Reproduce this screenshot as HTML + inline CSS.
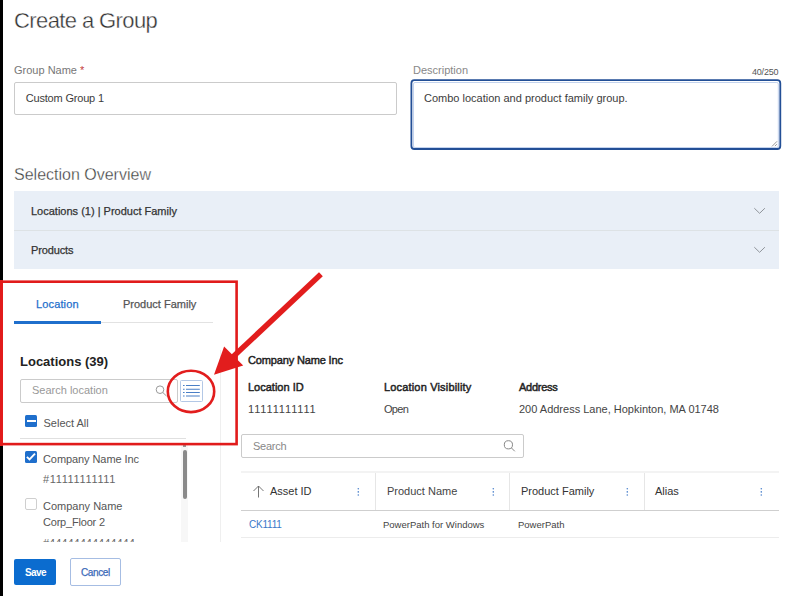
<!DOCTYPE html>
<html><head><meta charset="utf-8">
<style>
*{box-sizing:border-box;margin:0;padding:0}
html,body{width:800px;height:596px;overflow:hidden;background:#fff;font-family:"Liberation Sans",sans-serif;color:#333}
.a{position:absolute;white-space:nowrap;line-height:normal}
.t{position:absolute;white-space:nowrap;line-height:normal;font-size:11px}
.ln{position:absolute}
.inp{position:absolute;border:1px solid #cbcbcb;border-radius:2px;background:#fff}
.med{-webkit-text-stroke:0.25px currentColor}
.b{font-weight:bold}
</style></head><body>
<div class="ln" style="left:0;top:0;width:3px;height:596px;background:#000"></div>

<div class="a" id="t_title" style="left:14px;top:8px;font-size:22px;letter-spacing:-0.6px;color:#333;-webkit-text-stroke:0.35px #fff">Create a Group</div>

<div class="t" id="t_gn" style="left:14px;top:64px;color:#777">Group Name <span style="color:#c43c3c">*</span></div>
<div class="inp" style="left:14px;top:82px;width:383px;height:33px"></div>
<div class="t" id="t_cg" style="letter-spacing:-0.18px;left:25.7px;top:92px;color:#3c3c3c">Custom Group 1</div>

<div class="t" id="t_desc" style="left:413px;top:64px;color:#888">Description</div>
<div class="a" id="t_cnt" style="letter-spacing:-0.2px;left:752px;top:67px;font-size:9px;color:#555">40/250</div>
<svg class="ln" style="left:405px;top:74px" width="382" height="82"><rect x="8.5" y="8.5" width="364.8" height="65" rx="1.5" fill="none" stroke="#c3d3ee" stroke-width="1"/><rect x="6.4" y="6.2" width="368.9" height="68.8" rx="3" fill="none" stroke="#234f96" stroke-width="1.8"/><path d="M367 72.4 L372 67.3 M369.9 72.1 L371.9 70.2" stroke="#808080" stroke-width="0.8"/></svg>
<div class="t" id="t_combo" style="left:424px;top:92px;color:#3c3c3c">Combo location and product family group.</div>

<div class="a" id="t_so" style="left:14px;top:166px;font-size:16px;color:#3a3a3a;-webkit-text-stroke:0.3px #fff">Selection Overview</div>
<div class="ln" style="left:14px;top:191px;width:765px;height:78px;background:#e9eff7"></div>
<div class="ln" style="left:14px;top:230px;width:765px;height:1px;background:#dde2e5"></div>
<div class="t med" id="t_loc1" style="left:31px;top:205px;color:#333">Locations (1) | Product Family</div>
<div class="t med" id="t_prod" style="letter-spacing:-0.14px;left:31px;top:244px;color:#333">Products</div>
<svg class="ln" style="left:752px;top:205px" width="14" height="10"><path d="M2.3 3.2 L7.6 8.3 L12.9 3.2" fill="none" stroke="#8f949a" stroke-width="1"/></svg>
<svg class="ln" style="left:752px;top:244px" width="14" height="10"><path d="M2.3 3.2 L7.6 8.3 L12.9 3.2" fill="none" stroke="#8f949a" stroke-width="1"/></svg>

<!-- left panel -->
<div class="t med" id="t_tabloc" style="letter-spacing:0.14px;left:36px;top:298px;color:#1f6fcc">Location</div>
<div class="t med" id="t_tabpf" style="left:123px;top:298px;color:#555">Product Family</div>
<div class="ln" style="left:14px;top:322px;width:199px;height:1px;background:#e2e2e2"></div>
<div class="ln" style="left:14px;top:321px;width:87px;height:3px;background:#1f6fcc"></div>

<div class="a b" id="t_locs" style="left:20px;top:354px;font-size:13px;color:#222">Locations (39)</div>
<div class="inp" style="left:20px;top:379px;width:158px;height:24px"></div>
<div class="t" id="t_sl" style="left:32px;top:384px;color:#999">Search location</div>
<svg class="ln" style="left:153px;top:383px" width="16" height="16"><circle cx="7" cy="6.7" r="3.8" fill="none" stroke="#999" stroke-width="1"/><path d="M9.8 9.5 L13.5 13" stroke="#999" stroke-width="1"/></svg>
<div class="ln" style="left:180px;top:380px;width:23px;height:22px;border:1px solid #b3c8e6;border-radius:1.5px"></div>
<svg class="ln" style="left:180px;top:380px" width="23" height="22"><g stroke="#4a7fc6" stroke-width="1.15"><path d="M3 5.5h1.6M6 5.5h13.8M3 9.2h1.6M6 9.2h13.8M3 12.5h1.6M6 12.5h13.8M3 16h1.6M6 16h13.8"/></g></svg>

<div class="ln" style="left:25px;top:415px;width:12px;height:12px;background:#1f6fcc;border-radius:1.5px"></div>
<div class="ln" style="left:26.5px;top:419.5px;width:9px;height:2.5px;background:#fff"></div>
<div class="t" id="t_sa" style="left:43.5px;top:417px;color:#555">Select All</div>
<div class="ln" style="left:20px;top:438px;width:166px;height:1px;background:#e0e0e0"></div>

<div class="ln" style="left:220px;top:350px;width:1px;height:192px;background:#efefef"></div>

<div class="ln" style="left:0;top:445px;width:220px;height:97px;overflow:hidden">
  <div class="ln" style="left:181px;top:0;width:7px;height:97px;background:#f7f7f7"></div>
  <div class="ln" style="left:183px;top:0;width:3px;height:2px;background:#999"></div>
  <div class="ln" style="left:182.7px;top:4.7px;width:4px;height:49px;background:#8a8a8a;border-radius:2px"></div>
  <div class="ln" style="left:25px;top:6px;width:12px;height:12px;background:#1f6fcc;border-radius:1.5px"></div>
  <svg class="ln" style="left:25px;top:6px" width="12" height="12"><path d="M1.9 5.9 L4.5 8.4 L10 2.7" fill="none" stroke="#fff" stroke-width="1.9"/></svg>
  <div class="t" id="t_cni" style="letter-spacing:-0.08px;left:43px;top:8px;color:#555">Company Name Inc</div>
  <div class="t" id="t_h1" style="letter-spacing:0.65px;left:43px;top:28px;color:#666">#11111111111</div>
  <div class="ln" style="left:24.5px;top:53.3px;width:12px;height:11.5px;border:1px solid #cfcfcf;border-radius:2px"></div>
  <div class="t" id="t_cn" style="left:43px;top:54.5px;color:#555">Company Name</div>
  <div class="t" id="t_cf" style="letter-spacing:-0.2px;left:43px;top:71px;color:#555">Corp_Floor 2</div>
  <div class="t" style="left:43px;top:91.5px;color:#666">#44444444444444</div>
</div>

<!-- buttons -->
<div class="ln" style="left:14px;top:559px;width:42px;height:26px;background:#0b6ccf;border-radius:2px"></div>
<div class="a b" id="t_save" style="letter-spacing:-0.6px;left:25px;top:567px;font-size:10px;color:#fff">Save</div>
<div class="ln" style="left:70px;top:558px;width:51px;height:27.5px;border:1px solid #a6bde3;border-radius:2px"></div>
<div class="a med" id="t_cancel" style="letter-spacing:-0.4px;left:81px;top:567px;font-size:10px;color:#3a69b8">Cancel</div>

<!-- right -->
<div class="t" id="t_cni2" style="-webkit-text-stroke:0.45px #222;letter-spacing:-0.15px;left:248px;top:354px;color:#222">Company Name Inc</div>
<div class="t" id="t_lid" style="-webkit-text-stroke:0.45px #222;left:248px;top:381px;color:#222">Location ID</div>
<div class="t" id="t_lv" style="-webkit-text-stroke:0.45px #222;letter-spacing:0.17px;left:384px;top:381px;color:#222">Location Visibility</div>
<div class="t" id="t_addr" style="-webkit-text-stroke:0.45px #222;letter-spacing:-0.25px;left:519px;top:381px;color:#222">Address</div>
<div class="t" id="t_num" style="letter-spacing:0.86px;left:248px;top:403px;color:#444">11111111111</div>
<div class="t" id="t_open" style="letter-spacing:-0.7px;left:384px;top:403px;color:#444">Open</div>
<div class="t" id="t_addrv" style="left:519px;top:403px;color:#444">200 Address Lane, Hopkinton, MA 01748</div>

<div class="inp" style="left:241px;top:434px;width:283px;height:24px"></div>
<div class="t" id="t_search" style="letter-spacing:-0.25px;left:253px;top:440px;color:#888">Search</div>
<svg class="ln" style="left:500px;top:437px" width="18" height="18"><circle cx="8.4" cy="7.8" r="4.1" fill="none" stroke="#888" stroke-width="1"/><path d="M11.4 10.9 L14.8 14.3" stroke="#888" stroke-width="1"/></svg>

<div class="ln" style="left:241px;top:471px;width:538px;height:2px;background:#f3f3f3"></div>
<div class="ln" style="left:241px;top:510px;width:538px;height:1px;background:#cfcfcf"></div>
<div class="ln" style="left:241px;top:537px;width:538px;height:1px;background:#ececec"></div>
<div class="ln" style="left:375px;top:473px;width:1px;height:37px;background:#e6e6e6"></div>
<div class="ln" style="left:509px;top:473px;width:1px;height:37px;background:#e6e6e6"></div>
<div class="ln" style="left:644px;top:473px;width:1px;height:37px;background:#e6e6e6"></div>
<svg class="ln" style="left:250px;top:483px" width="16" height="16"><path d="M8.5 14.5 V3 M3.5 8 L8.5 3 L13.5 8" fill="none" stroke="#666" stroke-width="0.9"/></svg>
<div class="t" id="t_aid" style="left:270px;top:485px;color:#333">Asset ID</div>
<div class="t" id="t_pn" style="left:387px;top:485px;color:#444">Product Name</div>
<div class="t" id="t_pf" style="left:521px;top:485px;color:#333">Product Family</div>
<div class="t" id="t_alias" style="left:655px;top:485px;color:#333">Alias</div>
<svg class="ln" style="left:356px;top:486px" width="5" height="12"><g fill="#4d82cc"><circle cx="2.3" cy="2.8" r="0.8"/><circle cx="2.3" cy="5.9" r="0.8"/><circle cx="2.3" cy="9" r="0.8"/></g></svg>
<svg class="ln" style="left:491px;top:486px" width="5" height="12"><g fill="#4d82cc"><circle cx="2.3" cy="2.8" r="0.8"/><circle cx="2.3" cy="5.9" r="0.8"/><circle cx="2.3" cy="9" r="0.8"/></g></svg>
<svg class="ln" style="left:625px;top:486px" width="5" height="12"><g fill="#4d82cc"><circle cx="2.3" cy="2.8" r="0.8"/><circle cx="2.3" cy="5.9" r="0.8"/><circle cx="2.3" cy="9" r="0.8"/></g></svg>
<svg class="ln" style="left:759px;top:486px" width="5" height="12"><g fill="#4d82cc"><circle cx="2.3" cy="2.8" r="0.8"/><circle cx="2.3" cy="5.9" r="0.8"/><circle cx="2.3" cy="9" r="0.8"/></g></svg>
<div class="a" id="t_ck" style="letter-spacing:-0.2px;left:249px;top:519px;font-size:10px;color:#3a78c8">CK1111</div>
<div class="a" id="t_ppw" style="left:383px;top:519px;font-size:9.5px;color:#444">PowerPath for Windows</div>
<div class="a" id="t_pp" style="left:518px;top:519px;font-size:9.5px;color:#444">PowerPath</div>

<!-- annotations -->
<div class="ln" style="left:0;top:280px;width:3px;height:165.5px;background:#e31f1f"></div>
<svg class="ln" style="left:0;top:0" width="800" height="596">
  <rect x="1.3" y="281.7" width="235.3" height="162.4" fill="none" stroke="#e11b1b" stroke-width="2.6"/>
  <ellipse cx="191" cy="391.4" rx="23.2" ry="20.7" fill="none" stroke="#e21d1d" stroke-width="2.6"/>
  <path d="M320.9 274.2 L232 357.8" stroke="#e21d1d" stroke-width="5.5" fill="none"/>
  <path d="M214 374.7 L224.1 346.5 L243.2 365.6 Z" fill="#e21d1d"/>
</svg>
</body></html>
